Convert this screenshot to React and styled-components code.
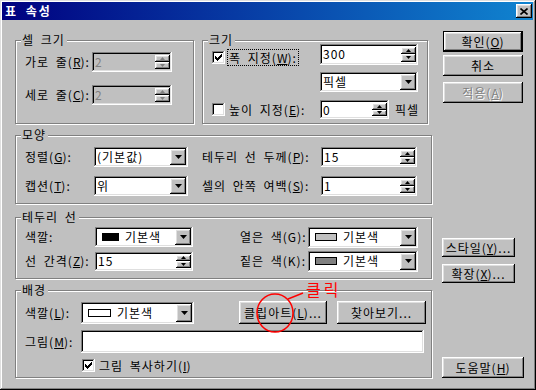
import React from 'react';
import styled, { createGlobalStyle } from 'styled-components';

const GlobalStyle = createGlobalStyle`
  html, body { margin: 0; padding: 0; background: #c0c0c0; }
  body {
    font-family: "Noto Sans CJK KR", "Noto Sans", sans-serif;
    font-size: 12px;
  }
  * { box-sizing: border-box; }
`;

const raised = `box-shadow: inset -1px -1px #000, inset 1px 1px #fff, inset -2px -2px #808080, inset 2px 2px #dfdfdf;`;
const sunken = `box-shadow: inset -1px -1px #fff, inset 1px 1px #808080, inset -2px -2px #dfdfdf, inset 2px 2px #000;`;

const Window = styled.div`
  width: 536px;
  height: 390px;
  padding: 2px 3px 3px 2px;
  background: #c0c0c0;
  box-shadow: inset -1px -1px #000, inset 1px 1px #dfdfdf, inset -2px -2px #808080, inset 2px 2px #fff;
  display: flex;
  flex-direction: column;
  color: #000;
  letter-spacing: 1px;
  word-spacing: 3px;
  line-height: 16px;
`;

const TitleBar = styled.div`
  height: 18px;
  display: flex;
  align-items: center;
  justify-content: space-between;
  padding-left: 3px;
  background: linear-gradient(to right, #000080, #1084d0);
`;

const TitleText = styled.span`
  color: #fff;
  font-weight: bold;
  letter-spacing: 2px;
`;

const CloseButton = styled.div`
  width: 16px;
  height: 14px;
  margin-right: 1px;
  display: flex;
  align-items: center;
  justify-content: center;
  background: #c0c0c0;
  ${raised}
`;

const Body = styled.div`
  display: flex;
  padding-top: 11px;
`;

const LeftCol = styled.div`
  width: 417px;
  margin-left: 13px;
  margin-top: 9px;
  display: flex;
  flex-direction: column;
`;

const TopRow = styled.div`
  display: flex;
  gap: 8px;
`;

const Group = styled.div`
  position: relative;
  width: ${p => p.$w}px;
  height: ${p => p.$h}px;
  margin-top: ${p => p.$mt || 0}px;
  padding: ${p => p.$pad};
  border: 1px solid #808080;
  box-shadow: inset 1px 1px #fff, 1px 1px #fff;
  display: flex;
  flex-direction: column;
`;

const Legend = styled.span`
  position: absolute;
  top: -9px;
  left: 5px;
  padding: 0 2px 0 1px;
  background: #c0c0c0;
`;

const Row = styled.div`
  display: flex;
  align-items: center;
  height: ${p => p.$h || 20}px;
  margin-top: ${p => p.$mt || 0}px;
`;

const Label = styled.span`
  width: ${p => p.$w}px;
  margin-left: ${p => p.$ml || 0}px;
  flex: none;
  white-space: nowrap;
`;

const Field = styled.div`
  display: flex;
  align-items: center;
  flex: none;
  width: ${p => p.$w}px;
  height: ${p => p.$h || 20}px;
  padding: 2px;
  background: ${p => (p.$disabled ? '#c0c0c0' : '#fff')};
  color: ${p => (p.$disabled ? '#808080' : '#000')};
  ${sunken}
`;

const FieldText = styled.span`
  flex: 1;
  padding-left: 1px;
  white-space: nowrap;
  display: flex;
  align-items: center;
  gap: 6px;
`;

const SpinCol = styled.div`
  display: flex;
  flex-direction: column;
  width: 15px;
  height: 100%;
  padding: 1px 0;
`;

const SpinBtn = styled.div`
  flex: 1;
  display: flex;
  align-items: center;
  justify-content: center;
  background: #c0c0c0;
  ${raised}
`;

const DropBtn = styled.div`
  width: 16px;
  height: 100%;
  display: flex;
  align-items: center;
  justify-content: center;
  background: #c0c0c0;
  ${raised}
`;

const Swatch = styled.span`
  display: inline-block;
  width: ${p => p.$w || 22}px;
  height: 8px;
  margin-left: 4px;
  background: ${p => p.$fill};
  border: 1px solid #000;
`;

const Btn = styled.div`
  flex: none;
  width: ${p => p.$w}px;
  height: ${p => p.$h || 21}px;
  margin-top: ${p => p.$mt || 0}px;
  margin-left: ${p => p.$ml || 0}px;
  display: flex;
  align-items: center;
  justify-content: center;
  background: #c0c0c0;
  white-space: nowrap;
  word-spacing: 0;
  border: ${p => (p.$default ? '1px solid #000' : 'none')};
  color: ${p => (p.$disabled ? '#808080' : '#000')};
  text-shadow: ${p => (p.$disabled ? '1px 1px #fff' : 'none')};
  ${raised}
`;

const RightCol = styled.div`
  display: flex;
  flex-direction: column;
  margin-left: 10px;
`;

const CheckRow = styled.div`
  display: flex;
  align-items: center;
  gap: 3px;
  margin-left: ${p => p.$ml || 0}px;
  align-self: ${p => (p.$top ? 'start' : 'center')};
  margin-top: ${p => p.$top || 0}px;
`;

const Box = styled.div`
  width: 13px;
  height: 13px;
  flex: none;
  background: #fff;
  display: flex;
  align-items: center;
  justify-content: center;
  ${sunken}
`;

const FocusText = styled.span`
  padding: 0 1px;
  outline: ${p => (p.$focus ? '1px dotted #000' : 'none')};
  outline-offset: 0;
  line-height: 15px;
  white-space: nowrap;
`;

const Grid = styled.div`
  display: grid;
  grid-template-columns: 108px auto 1fr;
  align-items: center;
  margin-top: ${p => p.$mt || 0}px;
`;

const ClipWrap = styled.div`
  position: relative;
  margin-left: 45px;
`;

const Mark = styled.svg`
  position: absolute;
  left: 16px;
  top: -9px;
  pointer-events: none;
  overflow: visible;
`;

const MarkText = styled.span`
  position: absolute;
  left: 67px;
  top: -21px;
  color: #ff0000;
  font-size: 16px;
  letter-spacing: 3px;
  line-height: 18px;
  white-space: nowrap;
`;

const U = styled.span`
  text-decoration: underline;
  text-underline-offset: 1px;
  letter-spacing: 0;
`;

const Down = ({ color = '#000' }) => (
  <svg width="7" height="4" viewBox="0 0 7 4">
    <path d="M0 0h7L3.5 4z" fill={color} />
  </svg>
);

const SpinArrow = ({ up, color = '#000' }) => (
  <svg width="5" height="3" viewBox="0 0 5 3">
    <path d={up ? 'M2.5 0L5 3H0z' : 'M0 0h5L2.5 3z'} fill={color} />
  </svg>
);

const Check = () => (
  <svg width="9" height="9" viewBox="0 0 9 9" shapeRendering="crispEdges">
    <path d="M1.5 3v3M2.5 4v3M3.5 5v3M4.5 4v3M5.5 3v3M6.5 2v3M7.5 1v3" stroke="#000" strokeWidth="1" />
  </svg>
);

const Spin = ({ w, h, value, disabled }) => (
  <Field $w={w} $h={h} $disabled={disabled}>
    <FieldText>{value}</FieldText>
    <SpinCol>
      <SpinBtn><SpinArrow up color={disabled ? '#808080' : '#000'} /></SpinBtn>
      <SpinBtn><SpinArrow color={disabled ? '#808080' : '#000'} /></SpinBtn>
    </SpinCol>
  </Field>
);

const Select = ({ w, h, children }) => (
  <Field $w={w} $h={h}>
    <FieldText>{children}</FieldText>
    <DropBtn><Down /></DropBtn>
  </Field>
);

const CheckBox = ({ checked }) => <Box>{checked && <Check />}</Box>;

export default function App() {
  return (
    <Window>
      <GlobalStyle />
      <TitleBar>
        <TitleText>표 속성</TitleText>
        <CloseButton>
          <svg width="8" height="7" viewBox="0 0 8 7">
            <path d="M0.5 0.5L7.5 6.5M7.5 0.5L0.5 6.5" stroke="#000" strokeWidth="1.6" />
          </svg>
        </CloseButton>
      </TitleBar>
      <Body>
        <LeftCol>
          <TopRow>
            <Group $w={179} $h={84} $pad="11px 0 0 9px">
              <Legend>셀 크기</Legend>
              <Row>
                <Label $w={67}>가로 줄(<U>R</U>):</Label>
                <Spin w={80} value="2" disabled />
              </Row>
              <Row $mt={13}>
                <Label $w={67}>세로 줄(<U>C</U>):</Label>
                <Spin w={80} value="2" disabled />
              </Row>
            </Group>
            <Group $w={226} $h={84} $pad="2px 0 0 9px">
              <Legend>크기</Legend>
              <Grid>
                <CheckRow $top={7}>
                  <CheckBox checked />
                  <FocusText $focus>폭 지정(<U>W</U>):</FocusText>
                </CheckRow>
                <Spin w={98} h={21} value="300" />
                <span />
              </Grid>
              <Grid $mt={7}>
                <span />
                <Select w={98}>픽셀</Select>
                <span />
              </Grid>
              <Grid $mt={8}>
                <CheckRow>
                  <CheckBox />
                  <FocusText>높이 지정(<U>E</U>):</FocusText>
                </CheckRow>
                <Spin w={69} h={19} value="0" />
                <Label $w={30} $ml={6}>픽셀</Label>
              </Grid>
            </Group>
          </TopRow>

          <Group $w={417} $h={69} $mt={11} $pad="11px 0 0 9px">
            <Legend>모양</Legend>
            <Row>
              <Label $w={69}>정렬(<U>G</U>):</Label>
              <Select w={94}>(기본값)</Select>
              <Label $w={119} $ml={14}>테두리 선 두께(<U>P</U>):</Label>
              <Spin w={96} value="15" />
            </Row>
            <Row $mt={9}>
              <Label $w={69}>캡션(<U>T</U>):</Label>
              <Select w={94}>위</Select>
              <Label $w={119} $ml={14}>셀의 안쪽 여백(<U>S</U>):</Label>
              <Spin w={96} value="1" />
            </Row>
          </Group>

          <Group $w={417} $h={62} $mt={13} $pad="9px 0 0 9px">
            <Legend>테두리 선</Legend>
            <Row>
              <Label $w={70}>색깔:</Label>
              <Select w={98}><Swatch $fill="#000" $w={17} />기본색</Select>
              <Label $w={68} $ml={47}>열은 색(G):</Label>
              <Select w={110} h={21}><Swatch $fill="#c0c0c0" />기본색</Select>
            </Row>
            <Row $mt={4}>
              <Label $w={70}>선 간격(<U>Z</U>):</Label>
              <Spin w={98} h={19} value="15" />
              <Label $w={68} $ml={47}>짙은 색(K):</Label>
              <Select w={110} h={21}><Swatch $fill="#808080" />기본색</Select>
            </Row>
          </Group>

          <Group $w={417} $h={88} $mt={11} $pad="10px 0 0 9px">
            <Legend>배경</Legend>
            <Row $h={23}>
              <Label $w={56}>색깔(<U>L</U>):</Label>
              <Select w={113} h={22}><Swatch $fill="#fff" $w={23} />기본색</Select>
              <ClipWrap>
                <Btn $w={88} $h={23}>클립아트(<U>L</U>)...</Btn>
                <Mark width="80" height="45" viewBox="0 0 80 45">
                  <ellipse cx="20" cy="21" rx="18" ry="19" fill="none" stroke="#ff0000" strokeWidth="1.5" />
                  <path d="M33 7L48 1" stroke="#ff0000" strokeWidth="1.5" fill="none" />
                </Mark>
                <MarkText>클릭</MarkText>
              </ClipWrap>
              <Btn $w={89} $h={23} $ml={10}>찾아보기...</Btn>
            </Row>
            <Row $h={23} $mt={6}>
              <Label $w={56}>그림(<U>M</U>):</Label>
              <Field $w={343} $h={23} />
            </Row>
            <Row $mt={5} $h={15}>
              <CheckRow $ml={57}>
                <CheckBox checked />
                <FocusText>그림 복사하기(<U>I</U>)</FocusText>
              </CheckRow>
            </Row>
          </Group>
        </LeftCol>

        <RightCol>
          <Btn $w={80} $ml={1} $default>확인(<U>O</U>)</Btn>
          <Btn $w={80} $ml={1} $mt={3}>취소</Btn>
          <Btn $w={80} $ml={1} $mt={6} $disabled>적용(<U>A</U>)</Btn>
          <Btn $w={73} $h={19} $mt={135}>스타일(<U>Y</U>)...</Btn>
          <Btn $w={73} $h={19} $mt={7}>확장(<U>X</U>)...</Btn>
          <Btn $w={82} $mt={74}>도움말(<U>H</U>)</Btn>
        </RightCol>
      </Body>
    </Window>
  );
}
